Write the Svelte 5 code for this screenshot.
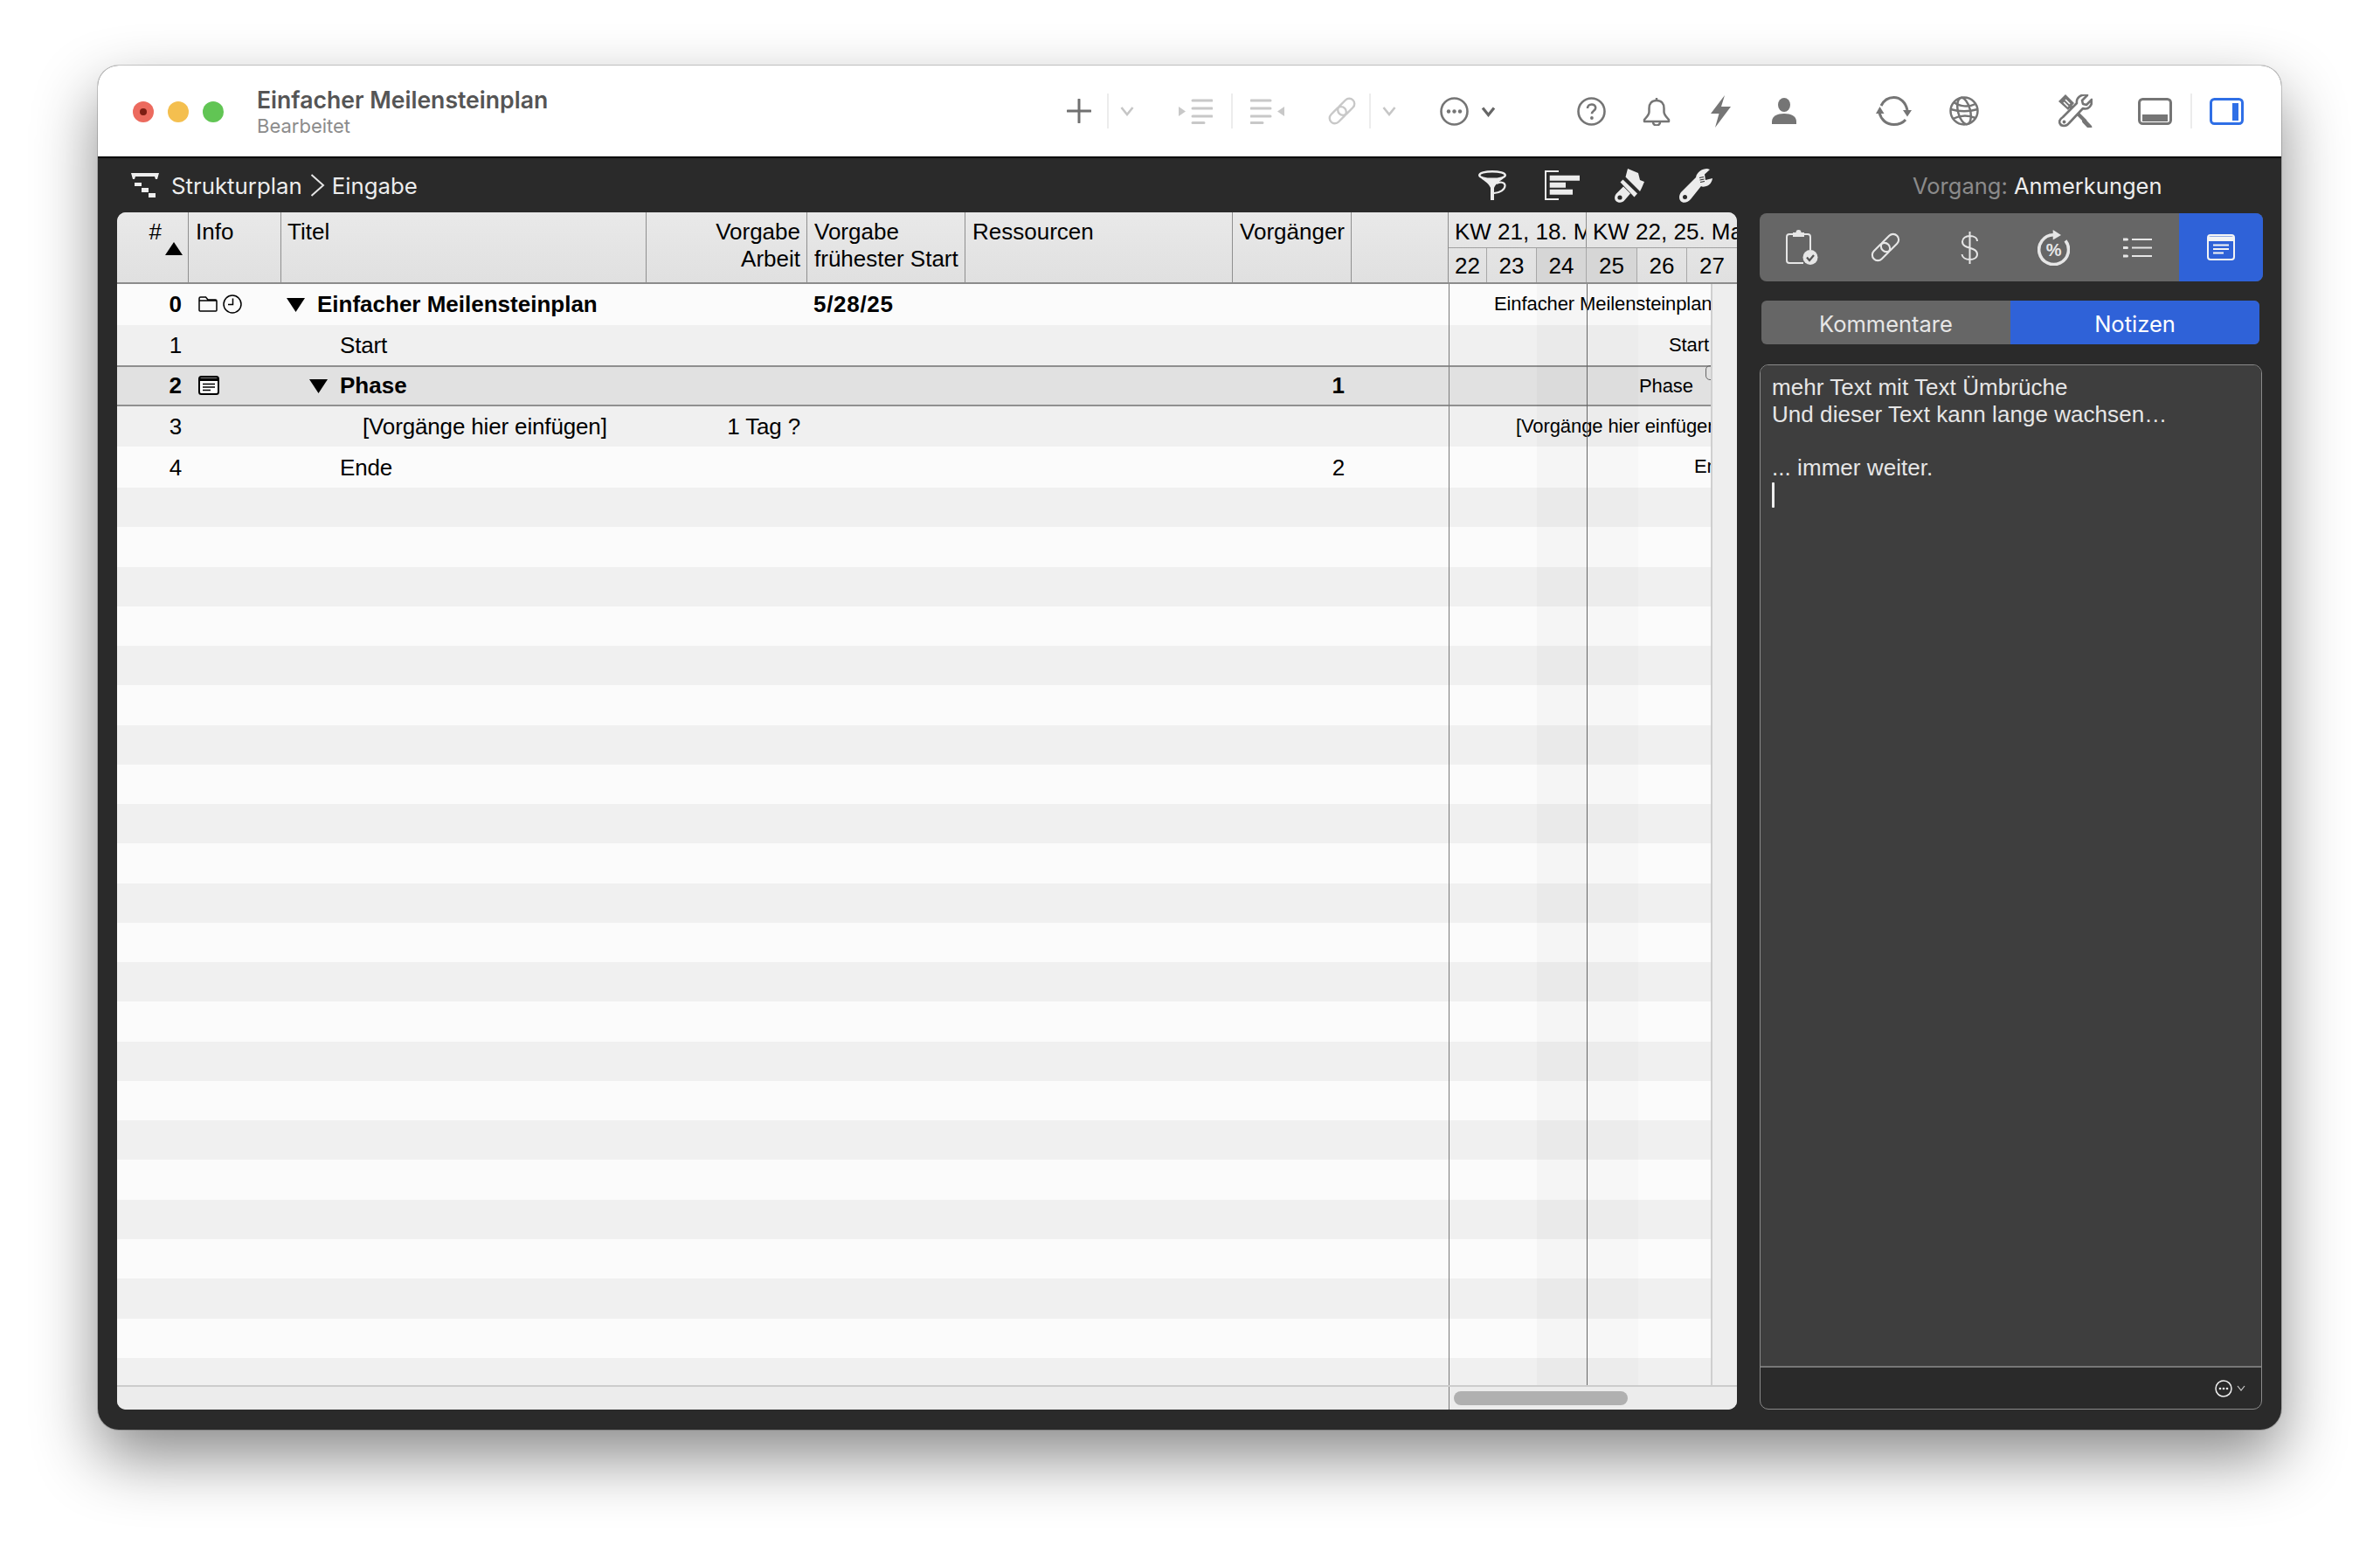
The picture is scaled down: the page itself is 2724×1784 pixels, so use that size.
<script>
  const rows = [
    { n: 0, bold: true, level: 0, open: true, title: "Einfacher Meilensteinplan", start: "5/28/25", info: "summary", bar: 51 },
    { n: 1, level: 1, title: "Start", bar: 251 },
    { n: 2, bold: true, level: 1, open: true, title: "Phase", pred: "1", info: "note", sel: true, bar: 217 },
    { n: 3, level: 2, title: "[Vorgänge hier einfügen]", work: "1 Tag ?", bar: 76 },
    { n: 4, level: 1, title: "Ende", pred: "2", bar: 280 }
  ];
  const filler = Array.from({ length: 23 }, (_, i) => i);
  const days = [
    { d: 22, w: 44 }, { d: 23, w: 57 }, { d: 24, w: 57, off: true },
    { d: 25, w: 58, off: true }, { d: 26, w: 57 }, { d: 27, w: 57 }
  ];
</script>

{#snippet chain(color, w)}
  <rect x="14.700" y="0.300" width="12" height="22" rx="6" transform="rotate(45 20.700 11.300)" fill="none" stroke={color} stroke-width={w} />
  <rect x="5.300" y="9.700" width="12" height="22" rx="6" transform="rotate(45 11.300 20.700)" fill="none" stroke={color} stroke-width={w} />
{/snippet}

<div class="page">
  <div class="window">
    <header class="titlebar">
      <div class="lights">
        <span class="light red"><i></i></span>
        <span class="light yellow"></span>
        <span class="light green"></span>
      </div>
      <div class="doc">
        <div class="doc-name">Einfacher Meilensteinplan</div>
        <div class="doc-state">Bearbeitet</div>
      </div>
      <div class="tools">
        <svg width="28" height="28" viewBox="0 0 28 28"><path d="M14 1v26M1 14h26" stroke="#707070" stroke-width="3" stroke-linecap="round" /></svg>
        <span class="sep g18"></span>
        <svg class="g13" width="16" height="12" viewBox="0 0 16 12"><path d="M1.5 2 8 10l6.500-8" fill="none" stroke="#c6c6c6" stroke-width="2.600" /></svg>
        <svg class="g51" width="39" height="29" viewBox="0 0 39 29"><path d="M0 9l8 5.500L0 20z" fill="#c8c8c8" /><path d="M16 2h22M16 11h22M16 20h22M16 27.500h13" stroke="#c8c8c8" stroke-width="3" stroke-linecap="round" /></svg>
        <span class="sep g21"></span>
        <svg class="g20" width="39" height="29" viewBox="0 0 39 29"><path d="M39 9l-8 5.500 8 5.500z" fill="#c8c8c8" /><path d="M1 2h22M1 11h22M1 20h22M1 27.500h13" stroke="#c8c8c8" stroke-width="3" stroke-linecap="round" /></svg>
        <svg class="g50" width="32" height="32" viewBox="0 0 32 32">{@render chain("#c8c8c8", 2.4)}</svg>
        <span class="sep g15"></span>
        <svg class="g13" width="16" height="12" viewBox="0 0 16 12"><path d="M1.5 2 8 10l6.500-8" fill="none" stroke="#c6c6c6" stroke-width="2.600" /></svg>
        <svg class="g50" width="33" height="33" viewBox="0 0 33 33"><circle cx="16.500" cy="16.500" r="15" fill="none" stroke="#757575" stroke-width="2.600" /><circle cx="10" cy="16.500" r="2.200" fill="#757575" /><circle cx="16.500" cy="16.500" r="2.200" fill="#757575" /><circle cx="23" cy="16.500" r="2.200" fill="#757575" /></svg>
        <svg class="g14" width="17" height="13" viewBox="0 0 17 13"><path d="M2 2.500 8.500 10.500 15 2.500" fill="none" stroke="#666" stroke-width="3.200" /></svg>
        <svg class="g93" width="33" height="33" viewBox="0 0 33 33"><circle cx="16.500" cy="16.500" r="15" fill="none" stroke="#757575" stroke-width="2.600" /><path d="M12 13c0-2.800 2-4.500 4.700-4.500 2.500 0 4.500 1.600 4.500 3.900 0 3.300-4.300 3.400-4.300 6.900" fill="none" stroke="#757575" stroke-width="2.600" /><circle cx="16.900" cy="24" r="1.900" fill="#757575" /></svg>
        <svg class="g42" width="32" height="33" viewBox="0 0 32 33"><path d="M16 4c-5.500 0-8.500 3.500-8.500 9v4c0 3.500-3 6-5.500 9v2h28v-2c-2.500-3-5.500-5.500-5.500-9v-4c0-5.500-3-9-8.500-9z" fill="none" stroke="#757575" stroke-width="2.500" stroke-linejoin="round" /><path d="M16 1v3M12 28.500a4 4 0 0 0 8 0" fill="none" stroke="#757575" stroke-width="2.500" /></svg>
        <svg class="g46" width="23" height="37" viewBox="0 0 23 37"><path d="M16 0 0 21h9.500L5 37l18-24H12z" fill="#757575" /></svg>
        <svg class="g47" width="28" height="30" viewBox="0 0 28 30"><ellipse cx="14" cy="8" rx="7" ry="8" fill="#757575" /><path d="M0 30v-3c0-6 6-9 14-9s14 3 14 9v3z" fill="#757575" /></svg>
        <svg class="g91" width="41" height="34" viewBox="0 0 41 34"><path d="M6 11C9 5 14 1.500 20.500 1.500 28 1.500 34 7 36 16M34 27C31 30.500 26 32.500 20.500 32.500 12 32.500 6 27 4 19" fill="none" stroke="#757575" stroke-width="3" /><path d="M31 16h10l-5 7.500zM0 20h9.500l-5-8z" fill="#757575" /></svg>
        <svg class="g43" width="34" height="34" viewBox="0 0 34 34"><g fill="none" stroke="#757575" stroke-width="2.500"><circle cx="17" cy="17" r="15.500" /><ellipse cx="17" cy="17" rx="7" ry="15.500" transform="rotate(-14 17 17)" /><path d="M5 7c7 5 17 6 25 2M1.500 15c10 3 21 3 31 0M4 26c8-4 16-5 26-1" /></g></svg>
        <svg class="g91" width="39" height="38" viewBox="0 0 39 38">
          <path d="M8 0 0 8l11 10 7-8z" fill="#757575" />
          <path d="M8 6l5 5M6 9l5 5" stroke="#fff" stroke-width="1.600" />
          <path d="M14 14 31 31" stroke="#757575" stroke-width="4" />
          <path d="M29 32 37 36" stroke="#757575" stroke-width="5" stroke-linecap="round" transform="rotate(20 33 33)" />
          <path d="M5 26 21 10C20 4 26-1 33 1L27 7l1 4 4 1 6-6c1 7-4 12-10 10L12 33c-3 4-9 4-10.500 0C0 30 2 28 5 26z" fill="#fff" stroke="#757575" stroke-width="2.600" stroke-linejoin="round" />
          <circle cx="6.500" cy="31.500" r="1.900" fill="#757575" />
        </svg>
        <svg class="g52" width="39" height="31" viewBox="0 0 39 31"><rect x="1.500" y="1.500" width="36" height="28" rx="4" fill="none" stroke="#757575" stroke-width="3" /><rect x="5" y="19" width="29" height="8" fill="#757575" /></svg>
        <span class="sep g21"></span>
        <svg class="g20" width="39" height="31" viewBox="0 0 39 31"><rect x="1.500" y="1.500" width="36" height="28" rx="4" fill="none" stroke="#2f6fe6" stroke-width="3" /><rect x="26" y="6" width="7" height="20" fill="#2f6fe6" /></svg>
      </div>
    </header>

    <div class="darkbar">
      <div class="crumbs">
        <svg width="32" height="28" viewBox="0 0 32 28"><path d="M0 0h32l-2 7h-2l-1-3H5L4 7H2z" fill="#eee" /><path d="M4 11h8v4H4zM12 17h8v5h-8zM20 23h8v5h-8z" fill="#eee" /></svg>
        <span class="crumb first">Strukturplan</span>
        <svg class="crumb-arrow" width="17" height="26" viewBox="0 0 17 26"><path d="M1.500 1 15 13 1.500 25" fill="none" stroke="#e4e4e4" stroke-width="2" /></svg>
        <span class="crumb">Eingabe</span>
        <div class="views">
          <svg width="32" height="34" viewBox="0 0 32 34"><ellipse cx="16" cy="5.500" rx="14.800" ry="4.300" fill="none" stroke="#ececec" stroke-width="2.400" /><path d="M1.500 7C6 11 26 11 30.500 7 28 11 20 14 18 20V34H14V20C12 14 4 11 1.500 7z" fill="#ececec" /><path d="M18 26C24 26 31 22 30.500 17 30 13 24 13 21 15" fill="none" stroke="#ececec" stroke-width="2.200" /></svg>
          <svg class="gap-44" width="40" height="34" viewBox="0 0 40 34"><path d="M16 1H1v32H16" fill="none" stroke="#ececec" stroke-width="2" /><path d="M5.700 5.700H40v6H5.700zM5.700 13.700H24v6H5.700zM5.700 21.700H32v6H5.700z" fill="#ececec" /></svg>
          <svg class="gap-40" width="34" height="39" viewBox="0 0 34 39"><path d="M15 0 27 5 29 13 34 15 31 22 29 26 12.500 9.500z" fill="#ececec" /><path d="M6.500 15.500 9.500 12.500 26 28.500 22.500 32.500z" fill="#ececec" /><path d="M10 20.500 18 28.500 11.500 36C9 39.500 4 39.500 1.500 37-1 34 0 30 3 27.500z" fill="#ececec" /><circle cx="6" cy="33" r="2.600" fill="#2a2a2a" /></svg>
          <svg class="gap-40" width="38" height="39" viewBox="0 0 38 39"><path d="M2 27 19 10C20 4 26 0 32 0L35 1 29 6.500 30 13 38 11C37.500 15 35 19 31 20 28 21 26 21 25 20L13 35C10 39 4 40 1.500 37-1 34 0 30 2 27z" fill="#ececec" /><circle cx="6.500" cy="32.500" r="2.500" fill="#2a2a2a" /><path d="M23 10.500l5-1M23.500 13l5-1M24 15.500l5-1" stroke="#2a2a2a" stroke-width="1.200" /></svg>
        </div>
      </div>
      <div class="inspector-title"><span>Vorgang:</span> Anmerkungen</div>
    </div>

    <div class="main">
      <section class="table">
        <div class="head">
          <div class="hc num">
            <span>#</span>
            <svg width="20" height="15" viewBox="0 0 20 15"><path d="M10 0l10 15H0z" fill="#000" /></svg>
          </div>
          <div class="hc">Info</div>
          <div class="hc titel">Titel</div>
          <div class="hc right">Vorgabe<br />Arbeit</div>
          <div class="hc">Vorgabe<br />frühester Start</div>
          <div class="hc">Ressourcen</div>
          <div class="hc right">Vorgänger</div>
          <div class="hc"></div>
          <div class="time">
            <div class="weeks">
              <div class="week w1">KW 21, 18. Mai</div>
              <div class="week w2">KW 22, 25. Mai</div>
            </div>
            <div class="days">
              {#each days as day}
                <div class="day" class:off={day.off} style:width="{day.w}px">{day.d}</div>
              {/each}
            </div>
          </div>
        </div>

        <div class="body">
          <div class="sheet">
            {#each rows as r}
              <div class="row" class:alt={r.n % 2 === 1} class:sel={r.sel} class:bold={r.bold}>
                <div class="c c-num">{r.n}</div>
                <div class="c c-info">
                  {#if r.info === "summary"}
                    <svg width="22" height="18" viewBox="0 0 22 18"><path d="M1 16V2.500C1 1.500 1.500 1 2.500 1h6L11 4h8.500c1 0 1.500.5 1.500 1.500V16c0 .6-.5 1-1 1H2c-.5 0-1-.4-1-1zM1 5h20" fill="none" stroke="#000" stroke-width="1.500" /></svg>
                    <svg class="clock" width="22" height="22" viewBox="0 0 22 22"><circle cx="11" cy="11" r="10" fill="none" stroke="#000" stroke-width="1.500" /><path d="M11.500 4.500v7H6" fill="none" stroke="#000" stroke-width="1.500" /></svg>
                  {:else if r.info === "note"}
                    <svg width="24" height="22" viewBox="0 0 24 22"><rect x="1" y="1" width="22" height="20" rx="2.500" fill="#fff" stroke="#000" stroke-width="2" /><path d="M1 2.500h22V6H1z" fill="#000" /><path d="M5 9.500h14M5 13h14M5 16.500h9" stroke="#000" stroke-width="1.400" /></svg>
                  {/if}
                </div>
                <div class="c c-title" style:padding-left="{6 + r.level * 26}px">
                  {#if r.open}
                    <svg width="21" height="16" viewBox="0 0 21 16"><path d="M0 0h21L10.500 16z" fill="#000" /></svg>
                  {:else}
                    <span class="tri-gap"></span>
                  {/if}
                  <span class="c-text">{r.title}</span>
                </div>
                <div class="c right">{r.work ?? ""}</div>
                <div class="c c-date">{r.start ?? ""}</div>
                <div class="c"></div>
                <div class="c right">{r.pred ?? ""}</div>
                <div class="c"></div>
              </div>
            {/each}
            {#each filler as i}
              <div class="row fill" class:alt={i % 2 === 0}></div>
            {/each}
          </div>

          <div class="gantt">
            {#each rows as r}
              <div class="row gantt-row" class:alt={r.n % 2 === 1} class:sel={r.sel} style:padding-left="{r.bar}px">
                {r.title}
              </div>
            {/each}
            {#each filler as i}
              <div class="row fill" class:alt={i % 2 === 0}></div>
            {/each}
            <div class="shade sat"></div>
            <div class="shade sun"></div>
            <div class="weekline"></div>
            <div class="bracket"></div>
          </div>

          <div class="vscroll"></div>
        </div>

        <div class="hbar">
          <div class="hbar-left"></div>
          <div class="hbar-right"><div class="thumb"></div></div>
        </div>
      </section>

      <aside class="inspector">
        <div class="seg">
          <div class="seg-item">
            <svg width="37" height="40" viewBox="0 0 37 40"><path d="M8 5H4C2 5 1 6 1 8v27c0 2 1 3 3 3h16M21 5h4c2 0 3 1 3 3v15" fill="none" stroke="#e6e6e6" stroke-width="2" /><path d="M8 3h3.500a3 3 0 0 1 6 0H21v5H8z" fill="#e6e6e6" /><circle cx="28" cy="31.500" r="8.500" fill="#e6e6e6" /><path d="M24 31.500l3 3.500 5-6" fill="none" stroke="#555" stroke-width="2.200" /></svg>
          </div>
          <div class="seg-item">
            <svg width="34" height="34" viewBox="0 0 32 32">{@render chain("#e6e6e6", 2)}</svg>
          </div>
          <div class="seg-item">
            <svg width="21" height="37" viewBox="0 0 21 37"><path d="M19 11c0-4-4-6-8.500-6S2 7.500 2 11.500c0 9 17 5.500 17 14.500 0 4-4 6-8.500 6S2 30 1.500 26M10.500 0v37" fill="none" stroke="#e6e6e6" stroke-width="2" /></svg>
          </div>
          <div class="seg-item">
            <svg width="37" height="41" viewBox="0 0 37 41"><path d="M18 5.800A16.900 16.900 0 1 0 32 12.400" fill="none" stroke="#e6e6e6" stroke-width="3.600" /><path d="M17.700 0 27 6l-9.300 5.500z" fill="#e6e6e6" /><text x="18.700" y="29.700" text-anchor="middle" class="pct">%</text></svg>
          </div>
          <div class="seg-item">
            <svg width="33" height="23" viewBox="0 0 33 23"><path d="M10 2h23M10 11.500h23M10 21h23" stroke="#e6e6e6" stroke-width="2" /><path d="M0 2h4.500M0 11.500h4.500M0 21h4.500" stroke="#e6e6e6" stroke-width="3" stroke-linecap="round" /></svg>
          </div>
          <div class="seg-item on">
            <svg width="32" height="30" viewBox="0 0 32 30"><rect x="1" y="1" width="30" height="28" rx="3" fill="#2f62d8" stroke="#f4f4f4" stroke-width="2" /><path d="M1 2.500h30V8H1z" fill="#f4f4f4" /><path d="M7 12.500h18M7 17h18M7 21.500h12" stroke="#f4f4f4" stroke-width="1.800" /></svg>
          </div>
        </div>

        <div class="tabs">
          <div class="tab">Kommentare</div>
          <div class="tab on">Notizen</div>
        </div>

        <div class="notes">
          <div class="notes-text">
            mehr Text mit Text Ümbrüche<br />
            Und dieser Text kann lange wachsen…<br />
            <br />
            ... immer weiter.<br />
            <span class="caret"></span>
          </div>
          <div class="notes-foot">
            <svg width="20" height="20" viewBox="0 0 20 20"><circle cx="10" cy="10" r="9" fill="none" stroke="#eee" stroke-width="1.500" /><circle cx="6" cy="10" r="1.300" fill="#eee" /><circle cx="10" cy="10" r="1.300" fill="#eee" /><circle cx="14" cy="10" r="1.300" fill="#eee" /></svg>
            <svg class="foot-chev" width="10" height="7" viewBox="0 0 10 7"><path d="M1 1l4 5 4-5" fill="none" stroke="#ccc" stroke-width="1.200" /></svg>
          </div>
        </div>
      </aside>
    </div>
  </div>
</div>

<style>
  :global(body) {
    background: #fff;
  }
  .page {
    width: 2724px;
    height: 1784px;
    box-sizing: border-box;
    padding: 75px 0 0 112px;
    overflow: hidden;
    font-family: "Liberation Sans", Arial, sans-serif;
    font-size: 26px;
    color: #000;
  }
  .window {
    width: 2499px;
    height: 1561px;
    border-radius: 24px;
    background: #2a2a2a;
    display: flex;
    flex-direction: column;
    overflow: hidden;
    box-shadow: 0 32px 72px rgba(0, 0, 0, 0.46), 0 0 0 1px rgba(0, 0, 0, 0.18);
  }

  .titlebar {
    height: 106px;
    box-sizing: border-box;
    flex: none;
    background: #fff;
    border-bottom: 2px solid #000;
    display: flex;
    align-items: center;
    padding-right: 43px;
  }
  .lights {
    display: flex;
    gap: 16px;
    margin-left: 40px;
    margin-top: 2px;
  }
  .light {
    width: 24px;
    height: 24px;
    border-radius: 50%;
    display: flex;
    align-items: center;
    justify-content: center;
  }
  .red { background: #ec6a5e; }
  .red i {
    width: 8px;
    height: 8px;
    border-radius: 50%;
    background: #7e1d13;
  }
  .yellow { background: #f4bf4f; }
  .green { background: #61c554; }
  .doc {
    margin-left: 38px;
    font-family: Inter, "Liberation Sans", sans-serif;
  }
  .doc-name {
    font-size: 26.600px;
    font-weight: 600;
    color: #555;
    line-height: 33px;
  }
  .doc-state {
    font-size: 22px;
    color: #8c8c8c;
    line-height: 26px;
  }
  .tools {
    margin-left: auto;
    display: flex;
    align-items: center;
    height: 44px;
  }
  .tools svg { flex: none; }
  .sep {
    width: 2px;
    height: 40px;
    background: #ececec;
    flex: none;
  }
  .g13 { margin-left: 13px; }
  .g14 { margin-left: 14px; }
  .g15 { margin-left: 15px; }
  .g18 { margin-left: 18px; }
  .g20 { margin-left: 20px; }
  .g21 { margin-left: 21px; }
  .g42 { margin-left: 42px; }
  .g43 { margin-left: 43px; }
  .g46 { margin-left: 46px; }
  .g47 { margin-left: 47px; }
  .g50 { margin-left: 50px; }
  .g51 { margin-left: 51px; }
  .g52 { margin-left: 52px; }
  .g91 { margin-left: 91px; }
  .g93 { margin-left: 93px; }

  .darkbar {
    height: 62px;
    flex: none;
    display: flex;
    align-items: center;
    color: #ededed;
    font-family: Inter, "Liberation Sans", sans-serif;
    font-size: 25.800px;
  }
  .crumbs {
    width: 1876px;
    flex: none;
    box-sizing: border-box;
    padding: 0 28px 0 38px;
    display: flex;
    align-items: center;
  }
  .crumb.first { margin-left: 14px; }
  .crumb-arrow { margin: 0 8px 0 9px; }
  .views {
    margin-left: auto;
    display: flex;
    align-items: center;
  }
  .gap-44 { margin-left: 44px; }
  .gap-40 { margin-left: 40px; }
  .inspector-title {
    margin-left: 201px;
    white-space: nowrap;
    font-size: 25.500px;
  }
  .inspector-title span { color: #8b8b8b; }

  .main {
    flex: 1;
    min-height: 0;
    display: flex;
    padding: 0 21px 23px 22px;
  }

  .table {
    width: 1854px;
    flex: none;
    display: flex;
    flex-direction: column;
    background: #ececec;
    border-radius: 10px;
    overflow: hidden;
  }
  .head {
    height: 82px;
    box-sizing: border-box;
    flex: none;
    display: grid;
    grid-template-columns: 82px 106px 418px 184px 181px 306px 136px 111px 330px;
    background: linear-gradient(#e9e9e9, #e0e0e0);
    border-bottom: 2px solid #8c8c8c;
    line-height: 31px;
  }
  .hc {
    border-right: 1px solid #8f8f8f;
    padding: 7px 0 0 8px;
    white-space: nowrap;
    overflow: hidden;
  }
  .hc.titel { padding-left: 7px; }
  .hc.right {
    text-align: right;
    padding: 7px 7px 0 0;
  }
  .hc.num {
    padding: 7px 6px 0 0;
    display: flex;
    flex-direction: column;
    align-items: flex-end;
  }
  .hc.num span { margin-right: 24px; height: 27px; }
  .time {
    display: flex;
    flex-direction: column;
    overflow: hidden;
  }
  .weeks {
    height: 41px;
    flex: none;
    display: flex;
    border-bottom: 1px solid #a0a0a0;
    box-sizing: border-box;
  }
  .week {
    white-space: nowrap;
    overflow: hidden;
    padding: 7px 0 0 7px;
    box-sizing: border-box;
  }
  .week.w1 { width: 158px; border-right: 1px solid #8f8f8f; }
  .week.w2 { width: 172px; }
  .days {
    flex: 1;
    display: flex;
  }
  .day {
    flex: none;
    text-align: center;
    box-sizing: border-box;
    border-right: 1px solid #a8a8a8;
    line-height: 40px;
  }
  .day:last-child { border-right: none; }
  .day.off { background: #d6d6d6; }

  .body {
    height: 1260px;
    flex: none;
    display: flex;
    overflow: hidden;
  }
  .sheet {
    width: 1524px;
    flex: none;
  }
  .row {
    height: 46.600px;
    box-sizing: border-box;
    background: #fbfbfb;
    display: grid;
    grid-template-columns: 82px 106px 418px 184px 181px 306px 136px 111px;
    align-items: center;
    white-space: nowrap;
    letter-spacing: -0.15px;
  }
  .row.alt { background: #f0f0f0; }
  .row.sel {
    background: #e1e1e1;
    border-top: 2px solid #8f8f8f;
    border-bottom: 2px solid #8f8f8f;
  }
  .row.fill { height: 45.270px; }
  .row.bold {
    font-weight: 700;
    letter-spacing: 0;
  }
  .c {
    padding: 1px 0 0 7px;
    overflow: hidden;
  }
  .c.right {
    padding: 1px 8px 0 0;
    text-align: right;
  }
  .c-num {
    padding: 1px 8px 0 0;
    text-align: right;
  }
  .c-date { letter-spacing: 0.7px; }
  .c-info {
    display: flex;
    align-items: center;
    padding: 0 0 0 11px;
    height: 26px;
  }
  .clock { margin-left: 6px; }
  .c-title {
    display: flex;
    align-items: center;
  }
  .c-title svg { flex: none; }
  .tri-gap {
    width: 21px;
    flex: none;
  }
  .c-text { margin-left: 14px; }

  .gantt {
    width: 299px;
    flex: none;
    position: relative;
    overflow: hidden;
    border-left: 1px solid #7a7a7a;
    border-right: 2px solid #cfcfcf;
  }
  .gantt-row {
    display: block;
    font-size: 22px;
    line-height: 46px;
    overflow: hidden;
    letter-spacing: -0.1px;
  }
  .gantt-row.sel { line-height: 44px; }
  .shade {
    position: absolute;
    top: 0;
    bottom: 0;
  }
  .sat {
    left: 100px;
    width: 57px;
    background: rgba(0, 0, 0, 0.025);
  }
  .sun {
    left: 158px;
    width: 58px;
    background: rgba(0, 0, 0, 0.015);
  }
  .weekline {
    position: absolute;
    top: 0;
    bottom: 0;
    left: 157px;
    width: 1px;
    background: #666;
  }
  .bracket {
    position: absolute;
    top: 93px;
    left: 293px;
    width: 14px;
    height: 17px;
    border: 1px solid #666;
    border-radius: 5px;
    box-sizing: border-box;
  }
  .vscroll {
    flex: 1;
    background: #eeeeee;
  }

  .hbar {
    flex: 1;
    display: flex;
    border-top: 2px solid #cccccc;
    background: #ececec;
  }
  .hbar-left {
    width: 1524px;
    flex: none;
  }
  .hbar-right {
    flex: 1;
    border-left: 1px solid #7a7a7a;
  }
  .thumb {
    width: 199px;
    height: 16px;
    margin: 5px 0 0 5px;
    border-radius: 8px;
    background: #b0b0b0;
  }

  .inspector {
    width: 576px;
    margin-left: 26px;
    flex: none;
    display: flex;
    flex-direction: column;
    font-family: Inter, "Liberation Sans", sans-serif;
    font-size: 25.500px;
    color: #e6e6e6;
  }
  .seg {
    height: 78px;
    margin-top: 1px;
    flex: none;
    display: grid;
    grid-template-columns: repeat(6, 1fr);
    background: #666;
    border-radius: 8px;
    overflow: hidden;
  }
  .seg-item {
    display: flex;
    align-items: center;
    justify-content: center;
  }
  .seg-item.on { background: #2f62d8; }
  .pct {
    font-family: "Liberation Sans", sans-serif;
    font-size: 20px;
    font-weight: 700;
    fill: #e6e6e6;
  }
  .tabs {
    height: 50px;
    margin: 22px 4px 0 2px;
    flex: none;
    display: flex;
    border-radius: 6px;
    overflow: hidden;
    background: #666;
  }
  .tab {
    flex: 1;
    display: flex;
    align-items: center;
    justify-content: center;
    padding-top: 2px;
  }
  .tab.on {
    background: #2f62d8;
    color: #fff;
  }
  .notes {
    flex: 1;
    min-height: 0;
    margin: 23px 1px 0 0;
    display: flex;
    flex-direction: column;
    border: 1px solid #8a8a8a;
    border-radius: 10px;
    overflow: hidden;
  }
  .notes-text {
    flex: 1;
    background: #3e3e3e;
    border-bottom: 2px solid #777;
    padding: 10px 0 0 13px;
    font-family: "Liberation Sans", Arial, sans-serif;
    font-size: 26px;
    line-height: 30.500px;
    color: #e6e6e6;
    letter-spacing: 0.05px;
  }
  .caret {
    display: inline-block;
    width: 3px;
    height: 29px;
    background: #eee;
    border-radius: 1px;
    vertical-align: top;
    margin-top: 2px;
  }
  .notes-foot {
    height: 47px;
    flex: none;
    display: flex;
    align-items: center;
    justify-content: flex-end;
    padding-right: 18px;
  }
  .foot-chev { margin-left: 5px; }
</style>
